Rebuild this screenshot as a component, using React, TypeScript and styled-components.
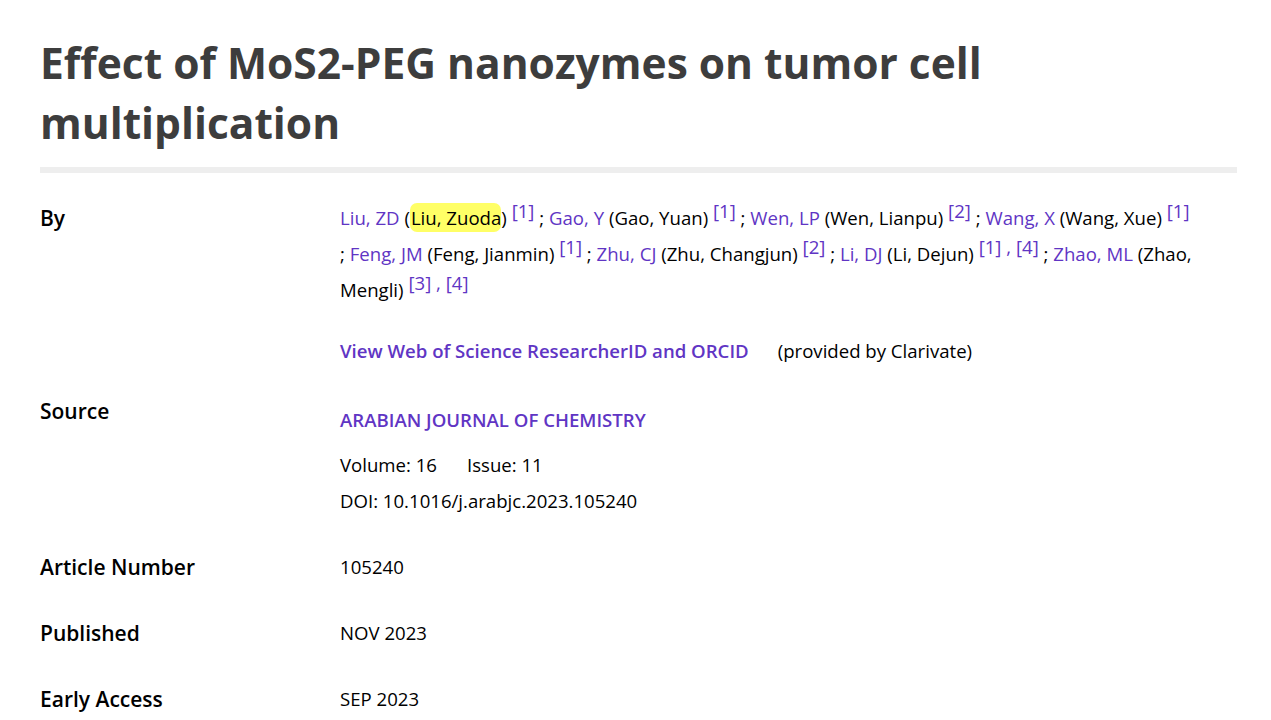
import React from 'react';
import styled, {createGlobalStyle} from 'styled-components';

const GlobalStyle = createGlobalStyle`
  body {
    margin: 0;
    background: #fff;
    font-family: "Open Sans", "Noto Sans", sans-serif;
    color: #000;
  }
`;

type Author = {
  short: string;
  full: string;
  refs: number[];
  highlight?: boolean;
};

const authors: Author[] = [
  {short: 'Liu, ZD', full: 'Liu, Zuoda', refs: [1], highlight: true},
  {short: 'Gao, Y', full: 'Gao, Yuan', refs: [1]},
  {short: 'Wen, LP', full: 'Wen, Lianpu', refs: [2]},
  {short: 'Wang, X', full: 'Wang, Xue', refs: [1]},
  {short: 'Feng, JM', full: 'Feng, Jianmin', refs: [1]},
  {short: 'Zhu, CJ', full: 'Zhu, Changjun', refs: [2]},
  {short: 'Li, DJ', full: 'Li, Dejun', refs: [1, 4]},
  {short: 'Zhao, ML', full: 'Zhao, Mengli', refs: [3, 4]},
];

export default function App() {
  return (
    <>
      <GlobalStyle/>
      <Page>
        <Title>Effect of MoS2-PEG nanozymes on tumor cell multiplication</Title>
        <Divider/>

        <Row $top={0}>
          <Label>By</Label>
          <Value>
            <AuthorList>
              {authors.map((a, i) => (
                <React.Fragment key={a.short}>
                  {i > 0 && ' ;\u00a0'}
                  <Link>{a.short}</Link>{' '}
                  ({a.highlight ? <Mark>{a.full}</Mark> : a.full}){' '}
                  {a.refs.map((r, j) => (
                    <React.Fragment key={r}>
                      {j > 0 && <Ref> , </Ref>}
                      <Ref>[{r}]</Ref>
                    </React.Fragment>
                  ))}
                </React.Fragment>
              ))}
            </AuthorList>
            <ResearcherLine>
              <StrongLink>View Web of Science ResearcherID and ORCID</StrongLink>
              <span>(provided by Clarivate)</span>
            </ResearcherLine>
          </Value>
        </Row>

        <Row $top={24}>
          <Label>Source</Label>
          <Value $pad={9}>
            <Journal>ARABIAN JOURNAL OF CHEMISTRY</Journal>
            <Inline>
              <span>Volume: 16</span>
              <span>Issue: 11</span>
            </Inline>
            <Line>DOI: 10.1016/j.arabjc.2023.105240</Line>
          </Value>
        </Row>

        <Row>
          <Label>Article Number</Label>
          <Value><Line>105240</Line></Value>
        </Row>

        <Row>
          <Label>Published</Label>
          <Value><Line>NOV 2023</Line></Value>
        </Row>

        <Row>
          <Label>Early Access</Label>
          <Value><Line>SEP 2023</Line></Value>
        </Row>
      </Page>
    </>
  );
}

const Page = styled.div`
  padding: 33px 34px 40px 40px;
`;

const Title = styled.h1`
  margin: 0;
  max-width: 1000px;
  font-size: 42.5px;
  line-height: 60px;
  font-weight: 700;
  color: #3d3d3d;
`;

const Divider = styled.div`
  height: 6px;
  background: #eeeeee;
  margin: 14px 0 27px;
`;

const Row = styled.div<{$top?: number}>`
  display: grid;
  grid-template-columns: 300px 1fr;
  margin-top: ${p => (p.$top ?? 30)}px;
`;

const Label = styled.div`
  font-size: 21px;
  line-height: 36px;
  font-weight: 600;
`;

const Value = styled.div<{$pad?: number}>`
  font-size: 18.6px;
  line-height: 36px;
  padding-top: ${p => p.$pad ?? 0}px;
`;

const AuthorList = styled.div`
  line-height: 36px;
`;

const Link = styled.span`
  color: #6035c4;
`;

const Ref = styled.span`
  color: #6035c4;
  font-size: 18.6px;
  line-height: 0;
  vertical-align: 7px;
`;

const Mark = styled.span`
  background: #ffff66;
  border-radius: 7px;
  padding: 2px 0 2px 1px;
`;

const ResearcherLine = styled.div`
  display: flex;
  gap: 29px;
  margin-top: 25px;
`;

const StrongLink = styled.span`
  color: #6035c4;
  font-weight: 600;
`;

const Journal = styled.div`
  color: #6035c4;
  font-weight: 600;
  margin-bottom: 9px;
`;

const Inline = styled.div`
  display: flex;
  gap: 30px;
`;

const Line = styled.div``;
